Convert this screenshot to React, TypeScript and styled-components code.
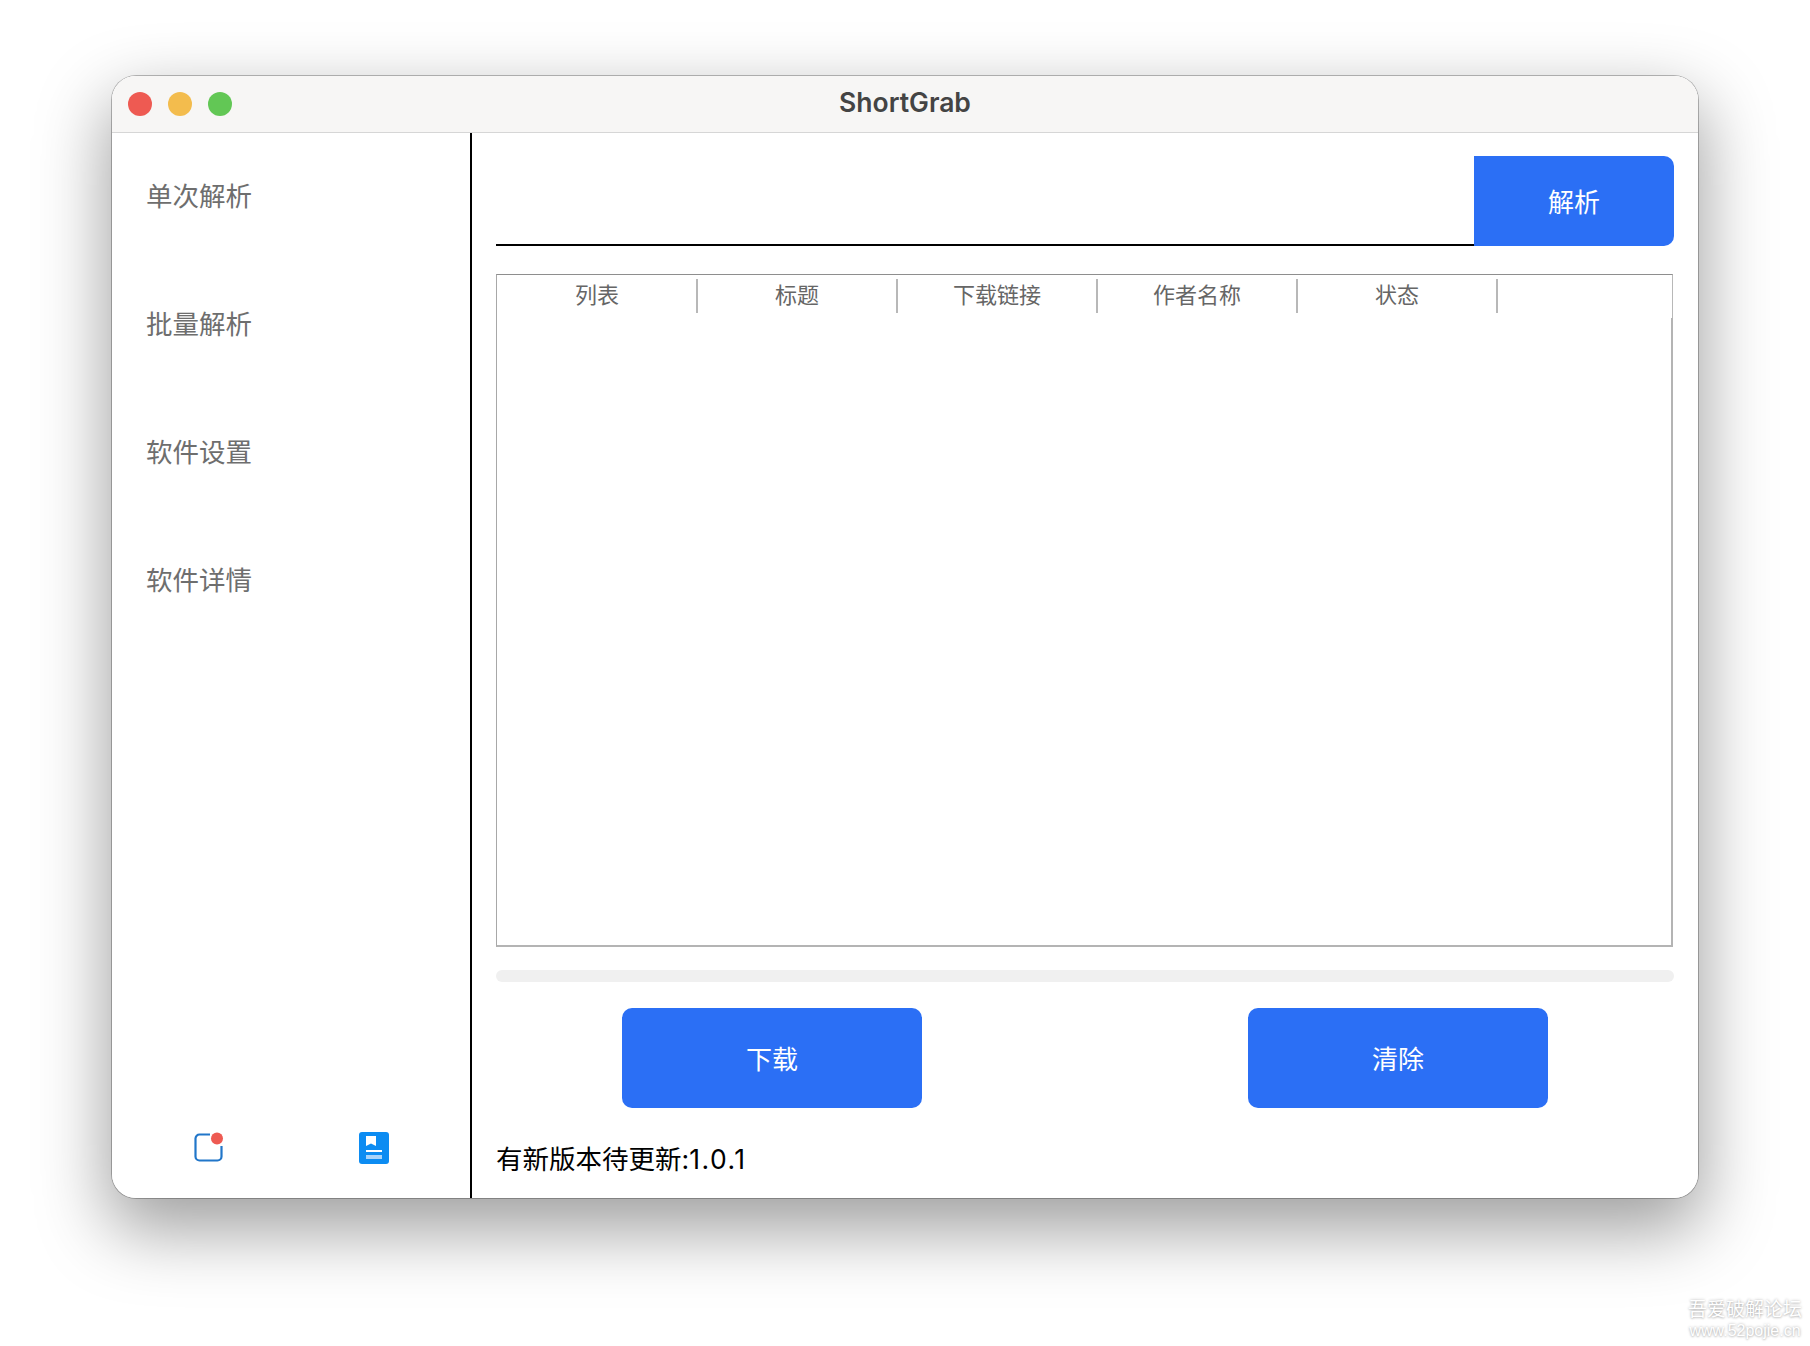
import styled, { createGlobalStyle } from 'styled-components';

const cjk = `Inter, "Noto Sans CJK SC", sans-serif`;

const GlobalStyle = createGlobalStyle`
  html, body {
    margin: 0;
    padding: 0;
    background: #fff;
  }
  * {
    box-sizing: border-box;
  }
`;

const Page = styled.div`
  position: relative;
  width: 1810px;
  height: 1346px;
  padding: 76px 112px 0;
  overflow: hidden;
  font-family: ${cjk};
`;

const Window = styled.div`
  width: 1586px;
  height: 1122px;
  display: flex;
  flex-direction: column;
  background: #fff;
  border-radius: 24px;
  overflow: hidden;
`;

const WindowShadow = styled.div`
  border-radius: 24px;
  width: 1586px;
  box-shadow: 0 28px 70px 4px rgba(0, 0, 0, 0.38), 0 0 0 1px rgba(0, 0, 0, 0.26);
`;

const TitleBar = styled.div`
  position: relative;
  height: 57px;
  flex: none;
  display: flex;
  align-items: center;
  justify-content: center;
  background: #f7f6f5;
  border-bottom: 1px solid #d6d6d6;
`;

const Lights = styled.div`
  position: absolute;
  left: 16px;
  top: 16px;
  display: flex;
  gap: 16px;
`;

const Light = styled.span<{ $color: string }>`
  width: 24px;
  height: 24px;
  border-radius: 50%;
  background: ${({ $color }) => $color};
`;

const Title = styled.div`
  font-size: 26.500px;
  font-weight: 600;
  color: #444;
  line-height: 1;
  margin-top: -3px;
`;

const Content = styled.div`
  flex: 1;
  display: flex;
  min-height: 0;
`;

const Sidebar = styled.aside`
  width: 360px;
  flex: none;
  display: flex;
  flex-direction: column;
  border-right: 2px solid #000;
`;

const NavItem = styled.div`
  height: 128px;
  display: flex;
  align-items: center;
  padding: 0 0 5px 34px;
  font-size: 26.500px;
  color: #6e6e6e;
`;

const SideIcons = styled.div`
  margin-top: auto;
  height: 67px;
  display: flex;
  align-items: flex-start;
  padding-left: 81px;
  gap: 133px;
`;

const Main = styled.main`
  flex: 1;
  display: flex;
  flex-direction: column;
  padding: 23px 24px 0;
`;

const InputRow = styled.div`
  height: 90px;
  display: flex;
`;

const UrlInput = styled.div`
  flex: 1;
  border-bottom: 2px solid #000;
`;

const ParseButton = styled.div`
  width: 200px;
  display: flex;
  align-items: center;
  justify-content: center;
  padding-bottom: 1px;
  background: #2b6ff5;
  border-radius: 0 10px 10px 0;
  color: #fff;
  font-size: 26px;
`;

const Table = styled.div`
  margin-top: 28px;
  width: 1177px;
  height: 673px;
  display: flex;
  flex-direction: column;
`;

const TableHeader = styled.div`
  height: 44px;
  flex: none;
  display: flex;
  padding: 4px 0 0 1px;
  border-top: 1px solid #8e8e8e;
  border-left: 1px solid #a8a8a8;
  border-right: 1px solid #b8b8b8;
`;

const HeaderCell = styled.div`
  width: 200px;
  height: 34px;
  display: flex;
  align-items: center;
  justify-content: center;
  padding-bottom: 6px;
  font-size: 22px;
  color: #666;
  border-right: 2px solid #b8b8b8;
`;

const TableBody = styled.div`
  flex: 1;
  border-left: 1px solid #a8a8a8;
  border-right: 2px solid #b4b4b4;
  border-bottom: 2px solid #b4b4b4;
`;

const ProgressBar = styled.div`
  margin-top: 23px;
  height: 12px;
  flex: none;
  border-radius: 6px;
  background: #f0f0f0;
`;

const ActionRow = styled.div`
  margin-top: 26px;
  height: 100px;
  flex: none;
  display: flex;
  justify-content: space-between;
  padding: 0 126px;
`;

const ActionButton = styled.div`
  width: 300px;
  display: flex;
  align-items: center;
  justify-content: center;
  padding-bottom: 2px;
  background: #2b6ff5;
  border-radius: 10px;
  color: #fff;
  font-size: 26px;
`;

const Status = styled.div`
  margin-top: 33px;
  font-size: 26.500px;
  line-height: 36px;
  color: #000;
`;

const Version = styled.span`
  letter-spacing: 1.500px;
`;

const Watermark = styled.div`
  position: absolute;
  right: 8px;
  bottom: 6px;
  display: flex;
  flex-direction: column;
  align-items: center;
  color: #fff;
  text-shadow: 0 0 3px rgba(0, 0, 0, 0.32), 0 1px 2px rgba(0, 0, 0, 0.14);
`;

const MarkCn = styled.div`
  font-size: 19px;
  line-height: 24px;
`;

const MarkUrl = styled.div`
  font-size: 16px;
  line-height: 18px;
  font-family: "Liberation Sans", sans-serif;
`;

const NoticeIcon = () => (
  <svg width="32" height="32" viewBox="0 0 32 32">
    <path
      d="M17 3.500H6.500A4 4 0 0 0 2.500 7.500V25.500A4 4 0 0 0 6.500 29.500H24.500A4 4 0 0 0 28.500 25.500V15"
      fill="none"
      stroke="#2176c9"
      strokeWidth="2.200"
    />
    <circle cx="24" cy="7.500" r="6" fill="#ee5a52" />
  </svg>
);

const BookIcon = () => (
  <svg width="32" height="34" viewBox="0 0 32 34">
    <rect x="1" y="1" width="30" height="32" rx="3" fill="#0c8cf2" />
    <path d="M8 5H18V15L13 12.500L8 15Z" fill="#fff" />
    <rect x="8" y="19" width="16" height="2" fill="#fff" />
    <rect x="8" y="24" width="16" height="4" fill="#a9d4fa" />
  </svg>
);

const navItems = ['单次解析', '批量解析', '软件设置', '软件详情'];
const columns = ['列表', '标题', '下载链接', '作者名称', '状态'];

export default function App() {
  return (
    <Page>
      <GlobalStyle />
      <WindowShadow>
        <Window>
          <TitleBar>
            <Lights>
              <Light $color="#ee5a52" />
              <Light $color="#f3bc4d" />
              <Light $color="#62c755" />
            </Lights>
            <Title>ShortGrab</Title>
          </TitleBar>
          <Content>
            <Sidebar>
              {navItems.map((item) => (
                <NavItem key={item}>{item}</NavItem>
              ))}
              <SideIcons>
                <NoticeIcon />
                <BookIcon />
              </SideIcons>
            </Sidebar>
            <Main>
              <InputRow>
                <UrlInput />
                <ParseButton>解析</ParseButton>
              </InputRow>
              <Table>
                <TableHeader>
                  {columns.map((column) => (
                    <HeaderCell key={column}>{column}</HeaderCell>
                  ))}
                </TableHeader>
                <TableBody />
              </Table>
              <ProgressBar />
              <ActionRow>
                <ActionButton>下载</ActionButton>
                <ActionButton>清除</ActionButton>
              </ActionRow>
              <Status>
                有新版本待更新:<Version>1.0.1</Version>
              </Status>
            </Main>
          </Content>
        </Window>
      </WindowShadow>
      <Watermark>
        <MarkCn>吾爱破解论坛</MarkCn>
        <MarkUrl>www.52pojie.cn</MarkUrl>
      </Watermark>
    </Page>
  );
}
